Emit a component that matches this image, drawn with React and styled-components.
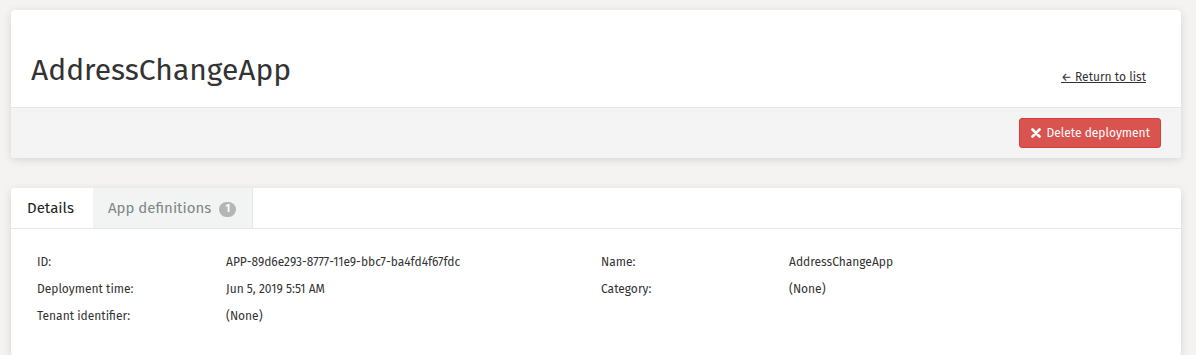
import React from "react";
import styled, { createGlobalStyle } from "styled-components";

const Global = createGlobalStyle`
  html, body { margin: 0; padding: 0; background: #f4f3f1; }
  body { font-family: "Fira Sans", "Lato", "Liberation Sans", sans-serif; color: #333; }
`;

const Page = styled.div`
  padding: 10px 15px 0 11px;
  display: flex;
  flex-direction: column;
  gap: 30px;
`;

const Card = styled.div`
  background: #fff;
  border-radius: 4px;
  box-shadow: 0 2px 8px rgba(0, 0, 0, 0.12);
  overflow: hidden;
`;

const HeaderTop = styled.div`
  height: 97px;
  display: flex;
  align-items: center;
  justify-content: space-between;
  padding: 0 35px 0 20px;
  border-bottom: 1px solid #e6e6e6;
`;

const Title = styled.h1`
  margin: 22px 0 0 0;
  font-size: 30px;
  font-weight: 400;
  color: #333;
`;

const BackLink = styled.a`
  margin-top: 37px;
  font-size: 12px;
  color: #333;
  text-decoration: underline;
`;

const Toolbar = styled.div`
  height: 50px;
  background: #f4f4f4;
  display: flex;
  align-items: center;
  justify-content: flex-end;
  padding: 0 20px;
`;

const DangerButton = styled.button`
  height: 30px;
  padding: 0 10px 0 11px;
  display: flex;
  align-items: center;
  gap: 6px;
  background: #d9534f;
  border: 1px solid #d43f3a;
  border-radius: 3px;
  color: #fff;
  font-family: inherit;
  font-size: 12px;
`;

const Tabs = styled.div`
  display: flex;
  border-bottom: 1px solid #e8e8e8;
`;

const Tab = styled.div`
  height: 40px;
  display: flex;
  align-items: center;
  gap: 8px;
  font-size: 15px;
  color: ${(p) => (p.$active ? "#222" : "#7c8787")};
  background: ${(p) => (p.$active ? "#fff" : "#f2f3f3")};
  border-right: ${(p) => (p.$active ? "none" : "1px solid #e6e6e6")};
  margin-bottom: ${(p) => (p.$active ? "-1px" : "0")};
  padding: ${(p) => (p.$active ? "0 19px 0 16px" : "0 16px 0 15px")};
`;

const Badge = styled.span`
  width: 17px;
  height: 15px;
  border-radius: 8px;
  background: #b5b5b5;
  color: #fff;
  font-size: 10px;
  font-weight: 700;
  display: inline-flex;
  align-items: center;
  justify-content: center;
  margin-top: 2px;
`;

const Details = styled.div`
  display: grid;
  grid-template-columns: 564px 1fr;
  padding: 19px 26px 27px 26px;
`;

const Column = styled.div`
  display: flex;
  flex-direction: column;
`;

const Row = styled.div`
  display: grid;
  grid-template-columns: 189px 1fr;
  height: 27px;
  align-items: center;
  font-size: 12px;
  color: #333;
`;

const RightRow = styled(Row)`
  grid-template-columns: 188px 1fr;
`;

function XIcon() {
  return (
    <svg width="10" height="10" viewBox="0 0 10 10">
      <path d="M1.5 1.5 L8.5 8.5 M8.5 1.5 L1.5 8.5" stroke="#fff" strokeWidth="2.6" strokeLinecap="round" />
    </svg>
  );
}

export default function App() {
  const left = [
    ["ID:", "APP-89d6e293-8777-11e9-bbc7-ba4fd4f67fdc"],
    ["Deployment time:", "Jun 5, 2019 5:51 AM"],
    ["Tenant identifier:", "(None)"],
  ];
  const right = [
    ["Name:", "AddressChangeApp"],
    ["Category:", "(None)"],
  ];
  return (
    <>
      <Global />
      <Page>
        <Card>
          <HeaderTop>
            <Title>AddressChangeApp</Title>
            <BackLink>← Return to list</BackLink>
          </HeaderTop>
          <Toolbar>
            <DangerButton>
              <XIcon />
              Delete deployment
            </DangerButton>
          </Toolbar>
        </Card>
        <Card>
          <Tabs>
            <Tab $active>Details</Tab>
            <Tab>
              App definitions <Badge>1</Badge>
            </Tab>
          </Tabs>
          <Details>
            <Column>
              {left.map(([k, v]) => (
                <Row key={k}>
                  <span>{k}</span>
                  <span>{v}</span>
                </Row>
              ))}
            </Column>
            <Column>
              {right.map(([k, v]) => (
                <RightRow key={k}>
                  <span>{k}</span>
                  <span>{v}</span>
                </RightRow>
              ))}
            </Column>
          </Details>
        </Card>
      </Page>
    </>
  );
}
